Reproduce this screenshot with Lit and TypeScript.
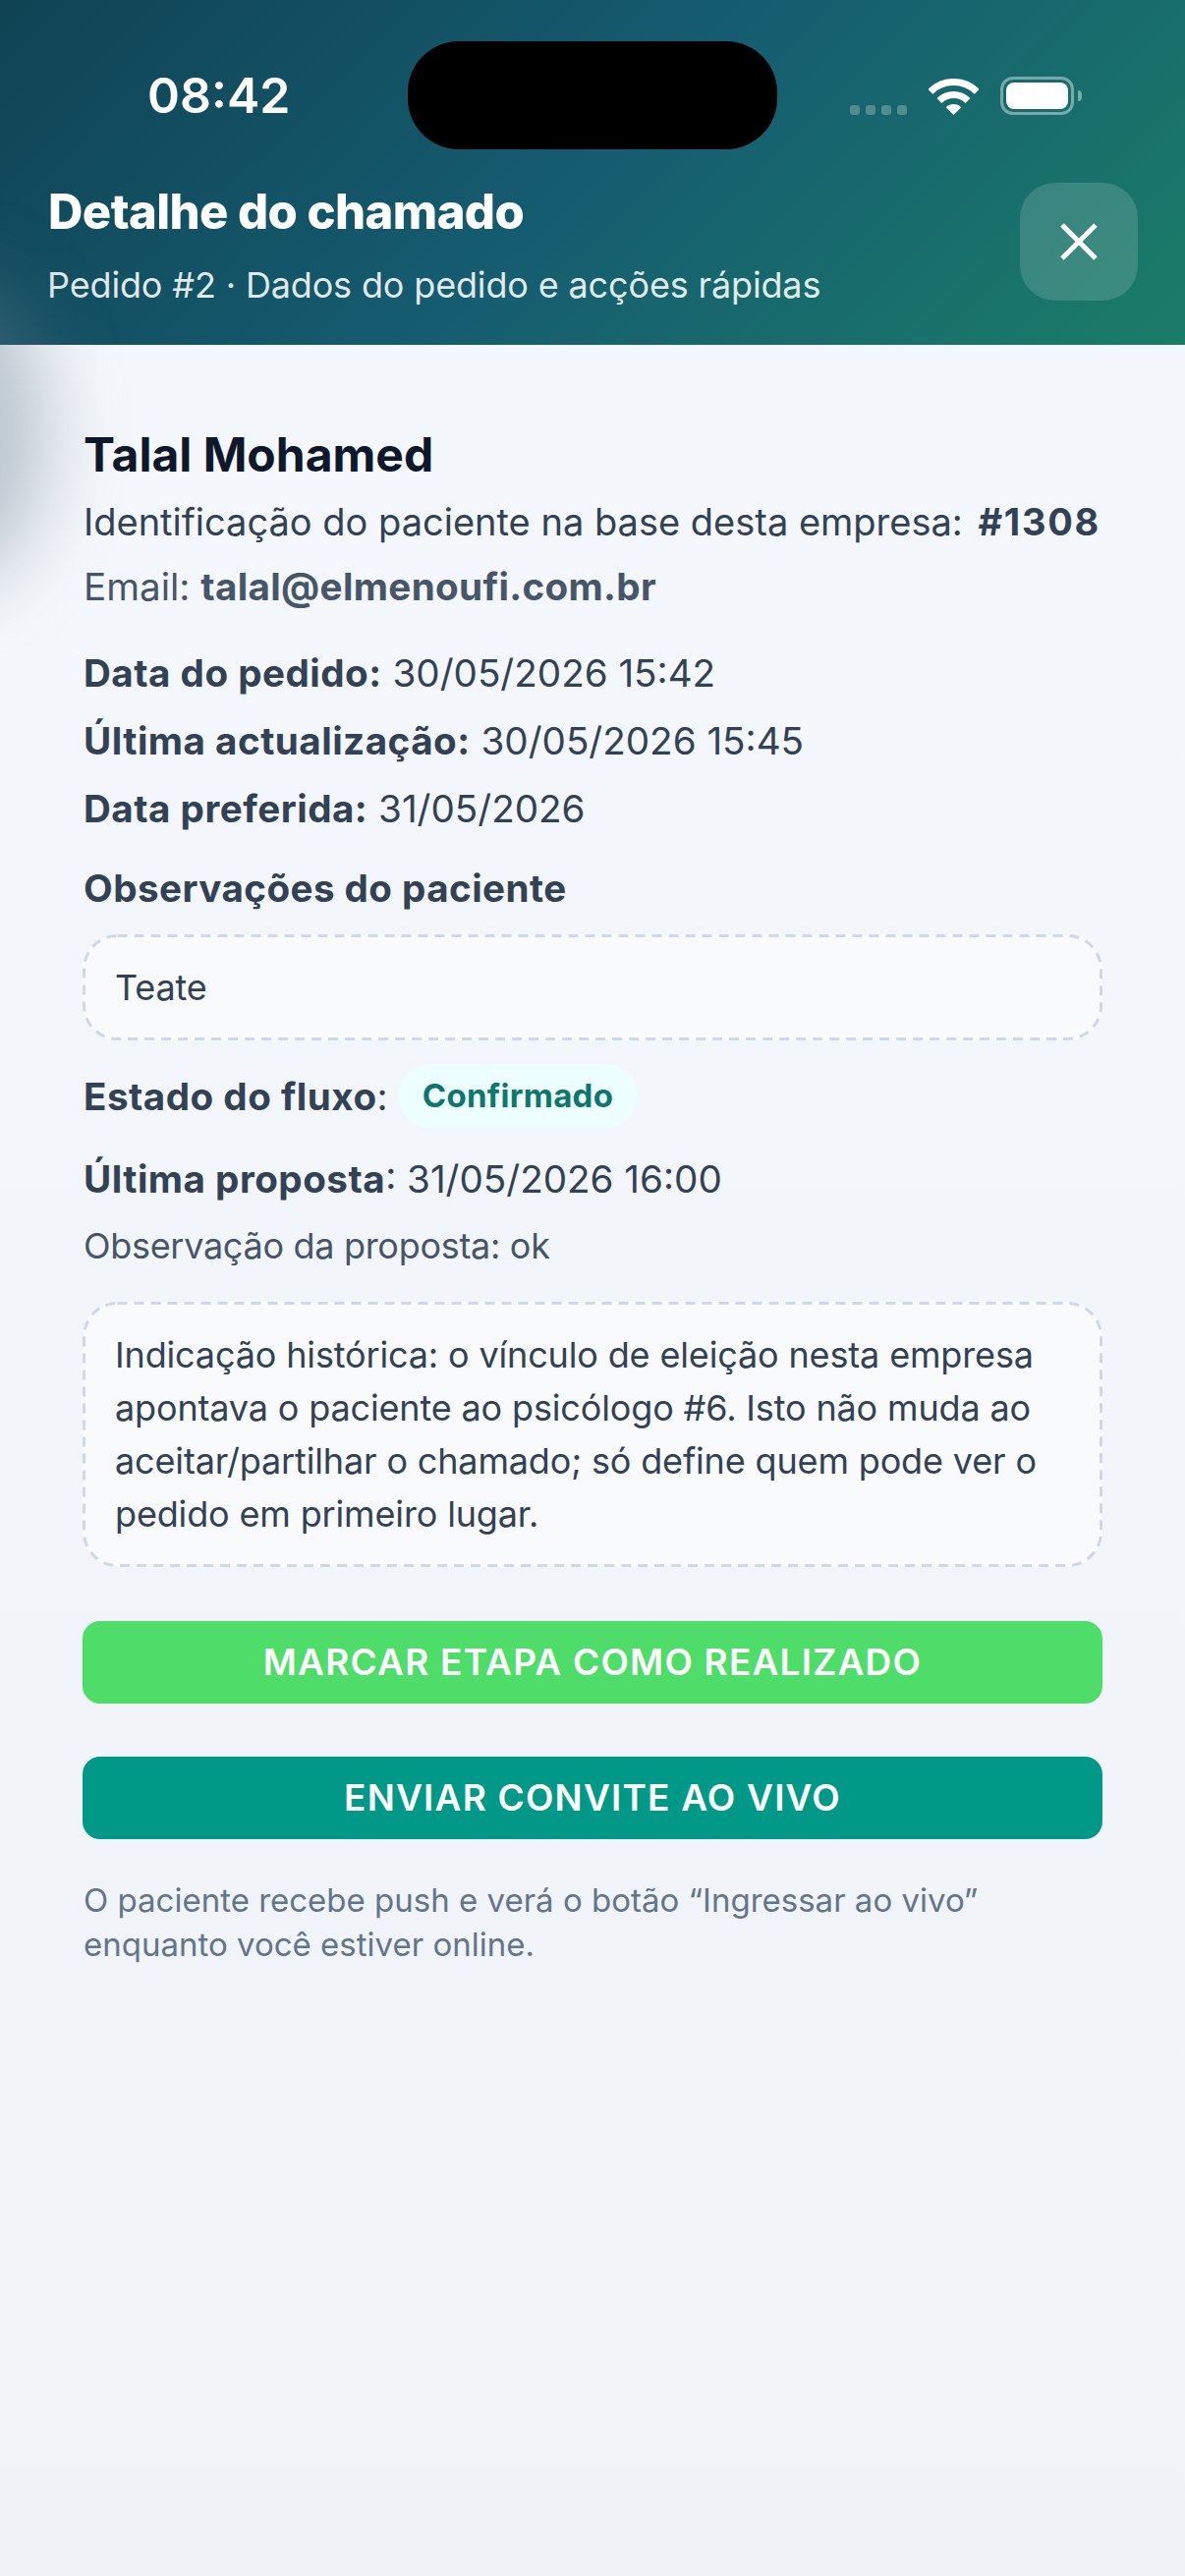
import { LitElement, html, css, svg } from "lit";
import { customElement } from "lit/decorators.js";

const dashes = svg`<svg class="dashes" aria-hidden="true"><rect></rect></svg>`;

@customElement("app-root")
export class AppRoot extends LitElement {
  static styles = css`
    :host {
      display: block;
      width: 1206px;
      height: 2622px;
      overflow: hidden;
      font-family: Inter, "Noto Sans", sans-serif;
      color: #334155;
      background: linear-gradient(180deg, #f5f8fc 0%, #eff3f8 100%);
    }

    .header {
      position: relative;
      height: 351px;
      box-sizing: border-box;
      padding: 0 48px 0 49px;
      color: #fff;
      background: linear-gradient(135deg, #0f4354 0%, #155c70 50%, #1a7d67 100%);
    }

    .status {
      display: flex;
      align-items: center;
      height: 196px;
    }
    .status-inner {
      display: flex;
      align-items: center;
      width: 100%;
      height: 40px;
      margin-top: -2px;
    }
    .time {
      margin-left: 101px;
      font-size: 50px;
      font-weight: 600;
      line-height: 40px;
    }
    .island {
      position: absolute;
      left: 415px;
      top: 42px;
      width: 376px;
      height: 110px;
      border-radius: 52px;
      background: #000;
    }
    .indicators {
      display: flex;
      align-items: flex-end;
      margin-left: auto;
      margin-right: 65px;
    }
    .dots {
      display: flex;
      gap: 6px;
      margin-right: 22px;
    }
    .dots i {
      width: 10px;
      height: 10px;
      border-radius: 3px;
      background: rgba(255, 255, 255, 0.25);
    }
    .wifi {
      display: block;
      width: 51px;
      height: 37px;
      margin-right: 22px;
    }
    .battery {
      position: relative;
      box-sizing: border-box;
      width: 75px;
      height: 39px;
      padding: 3px;
      border: 3px solid rgba(255, 255, 255, 0.42);
      border-radius: 13px;
    }
    .battery b {
      display: block;
      height: 100%;
      border-radius: 8px;
      background: #fff;
    }
    .battery::after {
      content: "";
      position: absolute;
      right: -11px;
      top: 11px;
      width: 4px;
      height: 11px;
      border-radius: 0 6px 6px 0;
      background: rgba(255, 255, 255, 0.42);
    }

    .head-row {
      display: flex;
      align-items: flex-start;
      justify-content: space-between;
      margin-top: -10px;
    }
    .title {
      margin: 0;
      font-size: 49px;
      font-weight: 800;
      line-height: 60px;
      letter-spacing: -0.6px;
    }
    .subtitle {
      margin: 20px 0 0 -1px;
      font-size: 36px;
      line-height: 48px;
      letter-spacing: -0.15px;
      color: rgba(255, 255, 255, 0.88);
    }
    .close {
      display: flex;
      align-items: center;
      justify-content: center;
      width: 120px;
      height: 120px;
      border-radius: 36px;
      background: rgba(255, 255, 255, 0.15);
    }
    .close svg {
      display: block;
      width: 38px;
      height: 38px;
    }

    .content {
      position: relative;
      padding: 85px 85px 0;
    }
    .shade {
      position: absolute;
      left: -125px;
      top: -70px;
      width: 170px;
      height: 310px;
      border-radius: 50%;
      background: rgba(100, 125, 140, 0.42);
      filter: blur(40px);
    }

    .name {
      position: relative;
      margin: 0;
      font-size: 48px;
      font-weight: 700;
      line-height: 54px;
      color: #0f172a;
    }
    p {
      position: relative;
      margin: 0;
      font-size: 38.6px;
      line-height: 54px;
    }
    strong {
      font-weight: 700;
      letter-spacing: 0.5px;
    }
    .id-line {
      margin-top: 14px;
      font-size: 38px;
    }
    .id-line strong {
      margin-left: 5px;
      letter-spacing: 1.7px;
    }
    .email {
      margin-top: 12px;
      color: #475569;
    }
    .email strong {
      letter-spacing: 0.35px;
    }
    .dates {
      display: flex;
      flex-direction: column;
      gap: 15px;
      margin-top: 34px;
    }
    .obs-title {
      margin-top: 27px;
      font-weight: 700;
      letter-spacing: 0.45px;
    }
    .note {
      position: relative;
      margin: 20px -1px 0;
      box-sizing: border-box;
      padding: 27px 33px;
      border-radius: 36px;
      background: #f8fafc;
      font-size: 36px;
      line-height: 54px;
      letter-spacing: -0.15px;
      color: #334155;
    }
    .dashes {
      position: absolute;
      inset: 0;
      width: 100%;
      height: 100%;
      pointer-events: none;
    }
    .dashes rect {
      x: 1.5px;
      y: 1.5px;
      width: calc(100% - 3px);
      height: calc(100% - 3px);
      rx: 34px;
      ry: 34px;
      fill: none;
      stroke: #cfd8e4;
      stroke-width: 3px;
      stroke-dasharray: 10 7;
    }
    .flow {
      display: flex;
      align-items: center;
      margin-top: 24px;
    }
    .badge {
      margin-left: 10px;
      padding: 0 25px;
      height: 65px;
      border-radius: 33px;
      background: #ecfeff;
      color: #0f766e;
      font-size: 33px;
      font-weight: 700;
      line-height: 65px;
      letter-spacing: 0.3px;
    }
    .proposal {
      margin-top: 25px;
    }
    .proposal-note {
      margin-top: 14px;
      font-size: 36px;
      letter-spacing: -0.3px;
      color: #475569;
    }
    .history {
      margin-top: 30px;
    }
    .btn {
      position: relative;
      margin-left: -1px;
      margin-right: -1px;
      height: 84px;
      border-radius: 18px;
      color: #fff;
      font-size: 37px;
      font-weight: 600;
      line-height: 84px;
      letter-spacing: 1.2px;
      text-align: center;
    }
    .btn-green {
      margin-top: 55px;
      background: #4edd69;
    }
    .btn-teal {
      margin-top: 54px;
      background: #009987;
    }
    .hint {
      margin-top: 40px;
      font-size: 33px;
      line-height: 45px;
      color: #64748b;
    }
  `;

  render() {
    return html`
      <div class="header">
        <div class="status">
          <div class="status-inner">
            <span class="time">08:42</span>
            <div class="indicators">
              <div class="dots"><i></i><i></i><i></i><i></i></div>
              <svg class="wifi" viewBox="0 0 51 37" fill="none" stroke="#fff" stroke-width="7">
                <path d="M1.8 13.3A33.5 33.5 0 0 1 49.2 13.3" />
                <path d="M11 22.5A20.5 20.5 0 0 1 40 22.5" />
                <path d="M25.5 37L17.7 29.2A11 11 0 0 1 33.3 29.2Z" fill="#fff" stroke="none" />
              </svg>
              <div class="battery"><b></b></div>
            </div>
          </div>
        </div>
        <div class="island"></div>
        <div class="head-row">
          <div>
            <h1 class="title">Detalhe do chamado</h1>
            <div class="subtitle">Pedido #2 · Dados do pedido e acções rápidas</div>
          </div>
          <div class="close">
            <svg viewBox="0 0 38 38" fill="none" stroke="#fff" stroke-width="5">
              <path d="M2 2L36 36M36 2L2 36" />
            </svg>
          </div>
        </div>
      </div>

      <div class="content">
        <div class="shade"></div>
        <h2 class="name">Talal Mohamed</h2>
        <p class="id-line">Identificação do paciente na base desta empresa: <strong>#1308</strong></p>
        <p class="email">Email: <strong>talal@elmenoufi.com.br</strong></p>
        <div class="dates">
          <p><strong>Data do pedido:</strong> 30/05/2026 15:42</p>
          <p><strong>Última actualização:</strong> 30/05/2026 15:45</p>
          <p><strong>Data preferida:</strong> 31/05/2026</p>
        </div>
        <p class="obs-title">Observações do paciente</p>
        <div class="note">${dashes}Teate</div>
        <div class="flow">
          <p><strong>Estado do fluxo</strong>:</p>
          <span class="badge">Confirmado</span>
        </div>
        <p class="proposal"><strong>Última proposta</strong>: 31/05/2026 16:00</p>
        <p class="proposal-note">Observação da proposta: ok</p>
        <div class="note history">
          ${dashes}Indicação histórica: o vínculo de eleição nesta empresa apontava o paciente ao psicólogo #6. Isto não muda ao
          aceitar/partilhar o chamado; só define quem pode ver o pedido em primeiro lugar.
        </div>
        <div class="btn btn-green">MARCAR ETAPA COMO REALIZADO</div>
        <div class="btn btn-teal">ENVIAR CONVITE AO VIVO</div>
        <p class="hint">O paciente recebe push e verá o botão “Ingressar ao vivo” enquanto você estiver online.</p>
      </div>
    `;
  }
}
